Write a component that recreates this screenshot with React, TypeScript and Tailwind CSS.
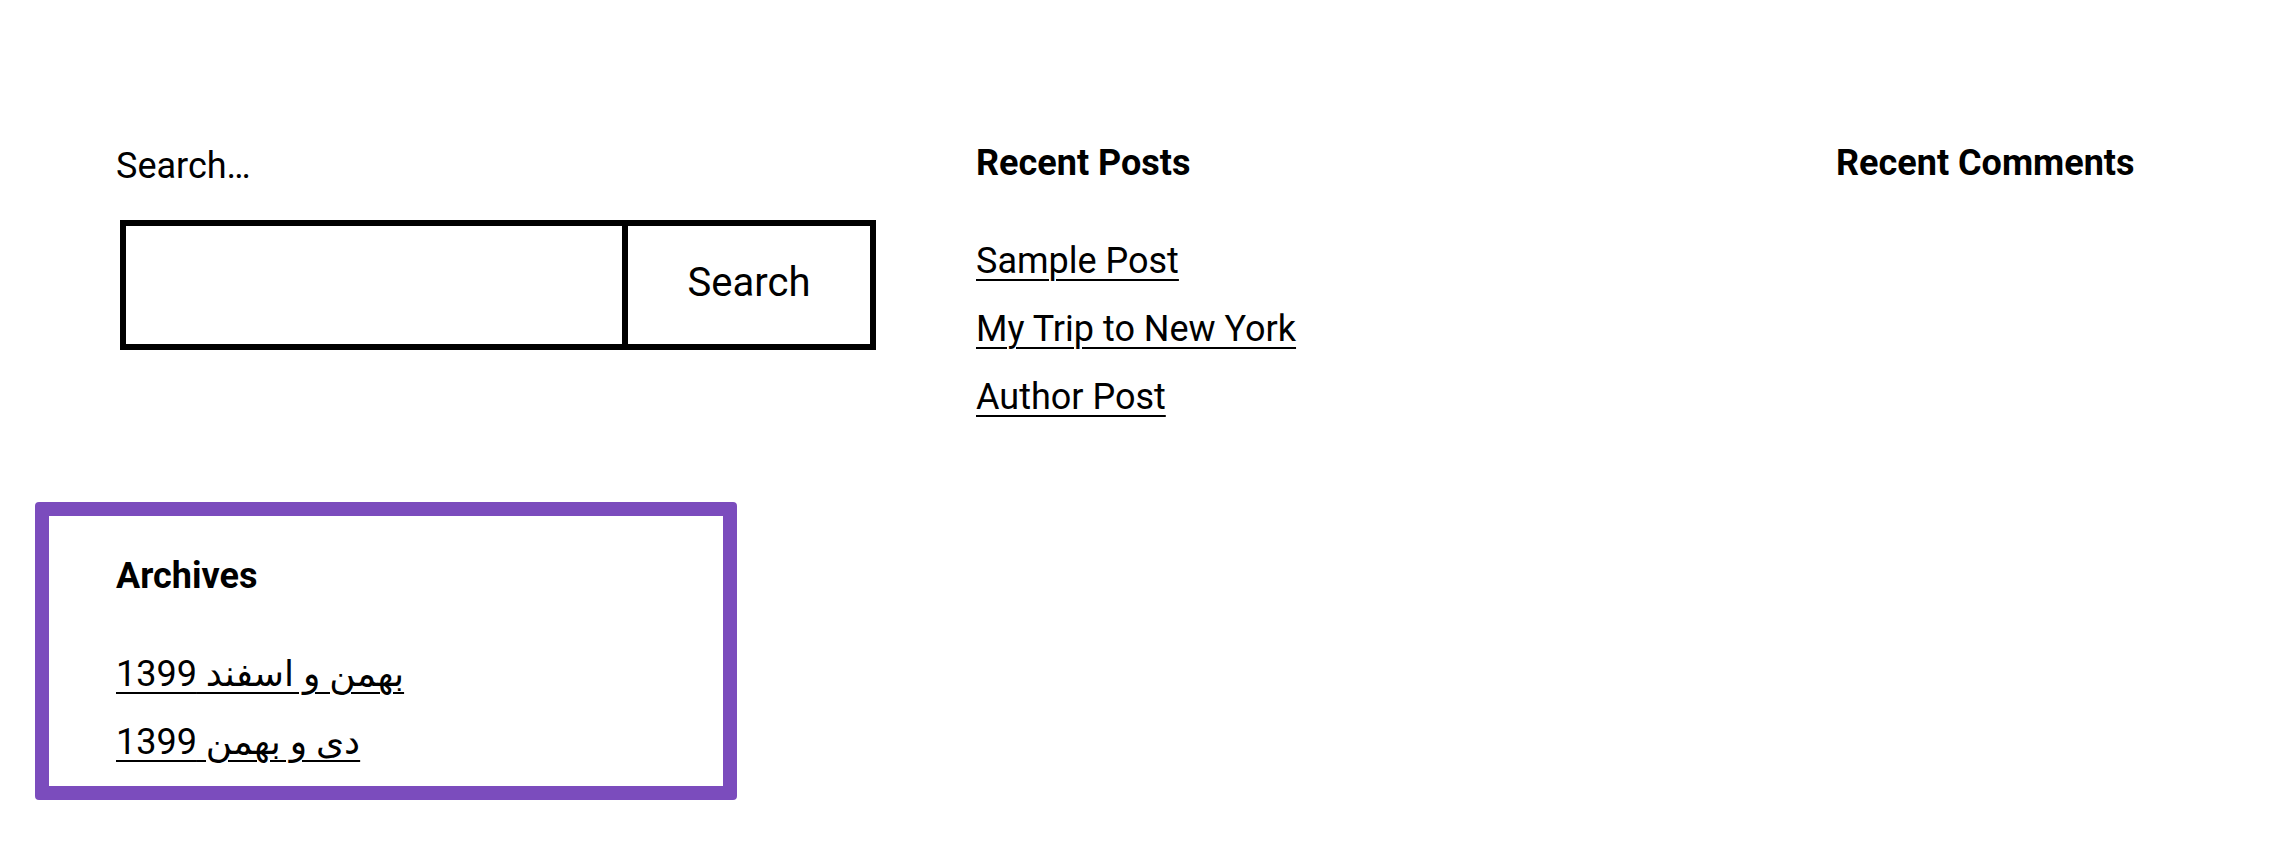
const recentPosts = ["Sample Post", "My Trip to New York", "Author Post"]
const archives = ["بهمن و اسفند 1399", "دی و بهمن 1399"]

function LinkList({ items }: { items: string[] }) {
  return (
    <ul className="mt-[40px]">
      {items.map((item) => (
        <li key={item} className="leading-[68px]">
          <a
            href="#"
            className="underline decoration-2 underline-offset-[6px] text-black"
          >
            {item}
          </a>
        </li>
      ))}
    </ul>
  )
}

export default function App() {
  return (
    <div
      className="w-[2280px] h-[844px] overflow-hidden bg-white text-black text-[36px]"
      style={{ fontFamily: 'Roboto, "DejaVu Sans", sans-serif' }}
    >
      <div className="pl-[35px] pt-[140px]">
        <div className="pl-[81px] grid grid-cols-[760px_760px_1fr] gap-x-[100px]">
          <div className="pt-[3px]">
            <label className="block leading-[1.3]">Search…</label>
            <form className="mt-[30px] ml-[4px] flex h-[130px] w-[756px]">
              <input
                type="search"
                className="flex-1 min-w-0 border-[6px] border-black bg-white outline-none"
              />
              <button
                type="button"
                className="w-[254px] -ml-[6px] border-[6px] border-black bg-white text-[40px] leading-none pb-[4px]"
              >
                Search
              </button>
            </form>
          </div>

          <div>
            <h2 className="font-bold leading-[1.3]">Recent Posts</h2>
            <LinkList items={recentPosts} />
          </div>

          <div>
            <h2 className="font-bold leading-[1.3]">Recent Comments</h2>
          </div>
        </div>

        <div className="mt-[71px] w-[702px] rounded-[4px] border-[14px] border-[#7b4cbd] pl-[67px] pt-[37px] pb-[10px]">
          <h2 className="font-bold leading-[1.3]">Archives</h2>
          <LinkList items={archives} />
        </div>
      </div>
    </div>
  )
}
